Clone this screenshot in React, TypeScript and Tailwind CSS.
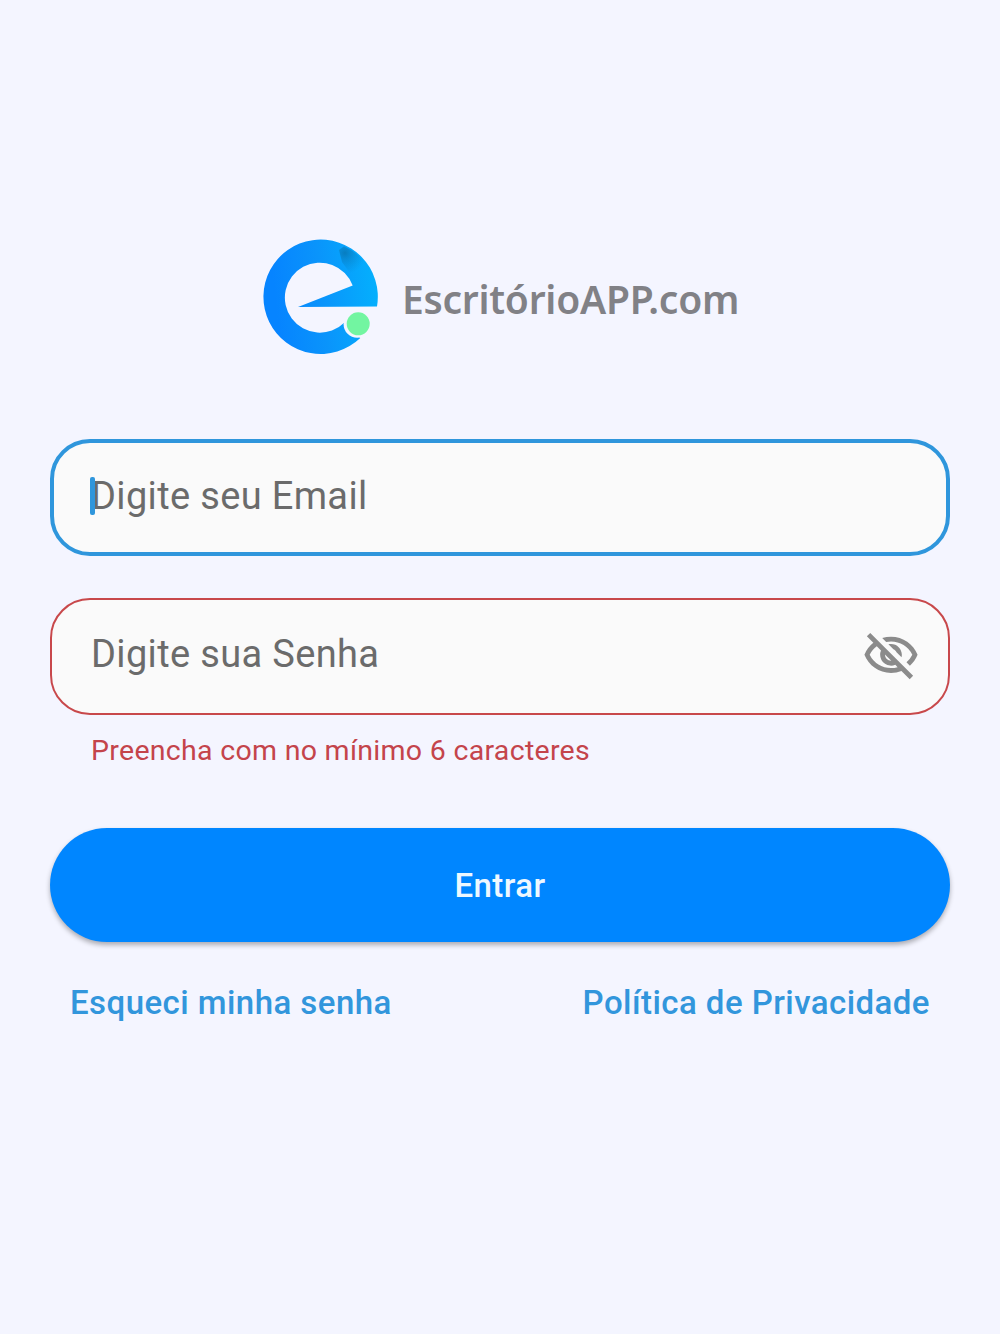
import { useState } from 'react';
import { MdOutlineVisibility, MdOutlineVisibilityOff } from 'react-icons/md';

function Logo() {
  return (
    <div className="flex items-center gap-[24px] h-[116px] pl-[212px]">
      <svg viewBox="0 0 116 116" className="w-[116px] h-[116px] shrink-0 overflow-visible" aria-hidden="true">
        <defs>
          <linearGradient id="ring" x1="0.1" y1="0.5" x2="1" y2="0.4">
            <stop offset="0" stopColor="#0684ff" />
            <stop offset="0.45" stopColor="#0a94fb" />
            <stop offset="1" stopColor="#04b0fd" />
          </linearGradient>
          <radialGradient id="fold" cx="83" cy="13" r="21" gradientUnits="userSpaceOnUse">
            <stop offset="0" stopColor="#08699f" stopOpacity="0.65" />
            <stop offset="0.4" stopColor="#0876b4" stopOpacity="0.4" />
            <stop offset="1" stopColor="#0880c0" stopOpacity="0" />
          </radialGradient>
        </defs>
        <path
          d="M115 66.5 L36 66.9 L90.7 45.5 A35 35 0 1 0 82.5 82.5 L98.3 98 A57.2 57.2 0 1 1 115 66.5 Z"
          fill="url(#ring)"
        />
        <path d="M77 10 L82 6.2 A57 57 0 0 1 106 27 L102 36 L90 36 L80 22 Z" fill="url(#fold)" />
        <circle cx="95.2" cy="84.2" r="13.6" fill="#f4f5ff" />
        <circle cx="96.2" cy="83.8" r="11.5" fill="#72f5a1" />
      </svg>
      <span className="font-['Noto_Sans'] text-[39px] font-semibold leading-none tracking-[-0.25px] text-[#818186] whitespace-nowrap">
        EscritórioAPP.com
      </span>
    </div>
  );
}

export default function App() {
  const [email, setEmail] = useState('');
  const [password, setPassword] = useState('');
  const [showPassword, setShowPassword] = useState(false);

  const Eye = showPassword ? MdOutlineVisibility : MdOutlineVisibilityOff;

  return (
    <main className="min-h-screen bg-[#f4f5ff] font-[Roboto,sans-serif] px-[50px] pt-[240px]">
      <Logo />

      <form className="mt-[83px] flex flex-col" onSubmit={(e) => e.preventDefault()}>
        {/* Email */}
        <div className="relative flex h-[117px] items-center rounded-[40px] border-[4px] border-[#2f96dc] bg-[#fafafa] px-[37px] pb-[3px]">
          <input
            type="email"
            value={email}
            onChange={(e) => setEmail(e.target.value)}
            placeholder="Digite seu Email"
            className="w-full bg-transparent text-[38px] tracking-[0.35px] text-[#333] caret-[#2f96dc] outline-none placeholder:text-[#6b6b6b]"
          />
          {!email && <span className="absolute left-[36px] top-[34px] h-[38px] w-[5px] rounded-[2px] bg-[#2f96dc]" />}
        </div>

        {/* Password */}
        <div className="mt-[42px] flex h-[117px] items-center rounded-[40px] border-[2px] border-[#c8484b] bg-[#fafafa] pl-[39px] pr-[28px]">
          <input
            type={showPassword ? 'text' : 'password'}
            value={password}
            onChange={(e) => setPassword(e.target.value)}
            placeholder="Digite sua Senha"
            className="min-w-0 flex-1 bg-transparent pb-[5px] text-[38px] tracking-[0.35px] text-[#333] outline-none placeholder:text-[#6b6b6b]"
          />
          <button type="button" className="pb-[2px]" aria-label="Mostrar senha" onClick={() => setShowPassword(!showPassword)}>
            <Eye className="size-[58px] text-[#8b8b8b]" />
          </button>
        </div>
        <p className="mt-[19px] pl-[41px] text-[28.5px] leading-[34px] tracking-[0.3px] text-[#c4444b]">
          Preencha com no mínimo 6 caracteres
        </p>

        <button
          type="submit"
          className="mt-[60px] h-[114px] rounded-full bg-[#0086ff] pt-[2px] text-[33px] font-medium tracking-[0.4px] text-[#eef8ff] shadow-[0_3px_5px_rgba(0,0,0,0.3)]"
        >
          Entrar
        </button>
      </form>

      <div className="mt-[41px] flex justify-between px-[20px] text-[33px] font-medium leading-[40px] tracking-[0.45px] text-[#3296dc]">
        <a href="#senha">Esqueci minha senha</a>
        <a href="#privacidade">Política de Privacidade</a>
      </div>
    </main>
  );
}
